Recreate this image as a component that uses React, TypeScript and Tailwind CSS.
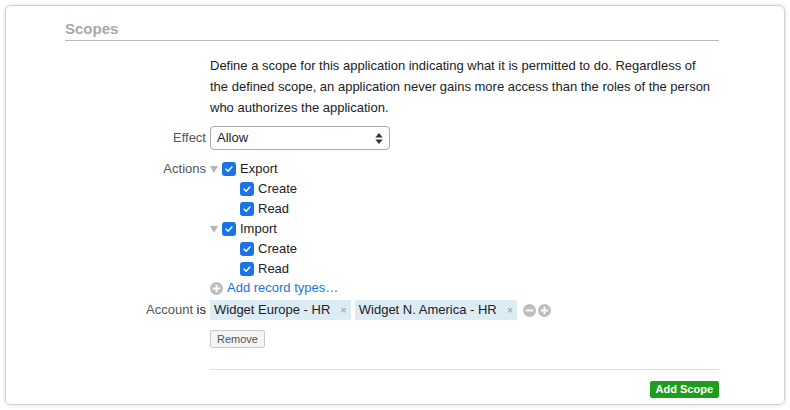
import React from "react";

function Check() {
  return (
    <span className="inline-flex h-[14px] w-[14px] items-center justify-center rounded-[3px] bg-[#1a73e8]">
      <svg viewBox="0 0 12 12" className="h-[10px] w-[10px]">
        <path d="M2.5 6.2l2.4 2.4 4.6-5" fill="none" stroke="white" strokeWidth="1.8" strokeLinecap="round" strokeLinejoin="round" />
      </svg>
    </span>
  );
}

function Tri() {
  return <span className="mr-[4px] inline-block h-0 w-0 border-x-[4px] border-t-[7px] border-x-transparent border-t-[#b5b5b5]" />;
}

function Circle({ plus }: { plus?: boolean }) {
  return (
    <svg viewBox="0 0 14 14" className="h-[13px] w-[13px]">
      <circle cx="7" cy="7" r="7" fill="#bdbdbd" />
      <rect x="3" y="6" width="8" height="2" fill="white" />
      {plus && <rect x="6" y="3" width="2" height="8" fill="white" />}
    </svg>
  );
}

function Item({ label, indent }: { label: string; indent?: boolean }) {
  return (
    <div className={`flex h-[20px] items-center gap-[4px] ${indent ? "pl-[30px]" : ""}`}>
      <Check />
      <span>{label}</span>
    </div>
  );
}

function Tag({ label }: { label: string }) {
  return (
    <span className="flex h-[20px] items-center gap-[10px] bg-[#dcecf5] px-[4px]">
      {label}
      <span className="text-[11px] text-[#999]">×</span>
    </span>
  );
}

export default function App() {
  return (
    <div className="h-[410px] w-[790px] bg-white p-[5px] font-[Liberation_Sans] text-[13px] text-[#222]">
      <div className="h-[400px] rounded-[6px] border border-[#d0d0d0] shadow-[0_0_4px_rgba(0,0,0,0.15)]">
        <div className="ml-[59px] mr-[65px] pt-[14px]">
          <h2 className="border-b border-[#bbb] pb-[2px] text-[15px] font-bold leading-[18px] text-[#a8a8a8]">Scopes</h2>
          <div className="grid grid-cols-[145px_1fr] pt-[14px]">
            <div />
            <p className="pr-[8px] leading-[21px]">
              Define a scope for this application indicating what it is permitted to do. Regardless of the defined scope, an application never gains more access than the roles of the person who authorizes the application.
            </p>
            <div className="flex items-center justify-end pr-[4px] pt-[8px] text-[#555]">Effect</div>
            <div className="pt-[8px]">
              <div className="flex h-[24px] w-[180px] items-center justify-between rounded-[4px] border border-[#aaa] px-[6px]">
                <span>Allow</span>
                <svg viewBox="0 0 8 12" className="h-[11px] w-[8px]"><path d="M4 0L8 5H0zM4 12L0 7h8z" fill="#333" /></svg>
              </div>
            </div>
            <div className="pr-[4px] pt-[9px] text-right leading-[20px] text-[#555]">Actions</div>
            <div className="pt-[9px]">
              <div className="flex h-[20px] items-center"><Tri /><Item label="Export" /></div>
              <Item label="Create" indent />
              <Item label="Read" indent />
              <div className="flex h-[20px] items-center"><Tri /><Item label="Import" /></div>
              <Item label="Create" indent />
              <Item label="Read" indent />
              <div className="flex h-[18px] items-center gap-[4px] text-[#1a73e8]"><Circle plus />Add record types…</div>
            </div>
            <div className="flex items-center justify-end pr-[4px] pt-[3px]"><span className="text-[#555]">Account</span>&nbsp;is</div>
            <div className="flex items-center gap-[4px] pt-[3px]">
              <Tag label="Widget Europe - HR" />
              <Tag label="Widget N. America - HR" />
              <span className="flex gap-[2px] pl-[2px]"><Circle /><Circle plus /></span>
            </div>
            <div />
            <div className="pt-[9px]">
              <button className="h-[18px] rounded-[2px] border border-[#c8c8c8] bg-[#f4f4f4] px-[6px] text-[11px] leading-[16px] text-[#555]">Remove</button>
            </div>
            <div />
            <div className="mt-[20px] flex justify-end border-t border-[#ddd] pt-[11px]">
              <button className="h-[17px] rounded-[2px] bg-[#1e9e1e] px-[6px] text-[11px] font-bold leading-[17px] text-white">Add Scope</button>
            </div>
          </div>
        </div>
      </div>
    </div>
  );
}
